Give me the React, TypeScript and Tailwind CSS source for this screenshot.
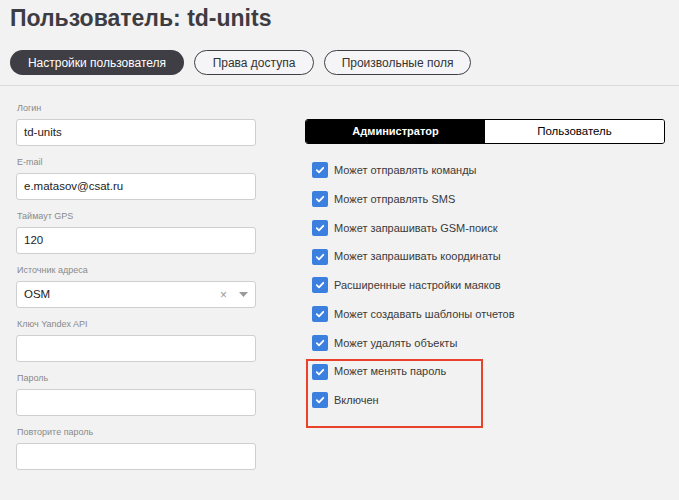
import React from 'react';

const fields = [
  { label: 'Логин', value: 'td-units' },
  { label: 'E-mail', value: 'e.matasov@csat.ru' },
  { label: 'Таймаут GPS', value: '120' },
  { label: 'Источник адреса', value: 'OSM', select: true },
  { label: 'Ключ Yandex API', value: '' },
  { label: 'Пароль', value: '' },
  { label: 'Повторите пароль', value: '' },
];

const perms = [
  'Может отправлять команды',
  'Может отправлять SMS',
  'Может запрашивать GSM-поиск',
  'Может запрашивать координаты',
  'Расширенные настройки маяков',
  'Может создавать шаблоны отчетов',
  'Может удалять объекты',
  'Может менять пароль',
  'Включен',
];

const Check = () => (
  <div className="w-4 h-4 rounded-[2px] bg-[#3b7fdf] flex items-center justify-center shrink-0">
    <svg width="10" height="10" viewBox="0 0 10 10" fill="none">
      <path d="M1.8 5.2 L4 7.3 L8.3 2.8" stroke="white" strokeWidth="1.8" strokeLinecap="round" strokeLinejoin="round" />
    </svg>
  </div>
);

export default function App() {
  return (
    <div className="w-[679px] h-[500px] bg-[#f2f2f2] overflow-hidden text-[#333] relative" style={{ fontFamily: '"Liberation Sans", Arial, sans-serif' }}>
      <div className="px-[10px] pt-[3px]">
        <h1 className="text-[23px] font-bold text-[#3d3c42] leading-[30px]">Пользователь: td-units</h1>
        <div className="flex gap-[10px] mt-[17px]">
          <button className="h-[25px] w-[174px] rounded-full bg-[#3f3e44] text-white text-[12px]">Настройки пользователя</button>
          <button className="h-[25px] w-[120px] rounded-full border border-[#3f3e44] bg-[#f5f5f7] text-[#333] text-[12px]">Права доступа</button>
          <button className="h-[25px] w-[147px] rounded-full border border-[#3f3e44] bg-[#f5f5f7] text-[#333] text-[12px]">Произвольные поля</button>
        </div>
      </div>
      <div className="h-px bg-[#dadada] mt-[10px]" />

      <div className="flex pt-[16px]">
        <div className="w-[240px] ml-[16px] flex flex-col gap-[10px]">
          {fields.map((f) => (
            <div key={f.label}>
              <div className="text-[9px] text-[#8a8a8a] pl-px leading-[12px] mb-[5px]">{f.label}</div>
              <div className="h-[27px] bg-white border border-[#cfcfcf] rounded-[3px] flex items-center px-[7px] text-[11.5px] text-[#222]">
                <span className="flex-1">{f.value}</span>
                {f.select && (
                  <div className="flex items-center gap-[12px] text-[#999]">
                    <span className="text-[12px] leading-none">×</span>
                    <svg width="9" height="5" viewBox="0 0 9 5"><path d="M0 0 L9 0 L4.5 5 Z" fill="#9a9a9a" /></svg>
                  </div>
                )}
              </div>
            </div>
          ))}
        </div>

        <div className="ml-[49px] w-[360px] pt-[17px]">
          <div className="flex h-[25px] border border-black rounded-[3px] overflow-hidden">
            <div className="w-1/2 bg-black text-white font-bold text-[11px] flex items-center justify-center">Администратор</div>
            <div className="w-1/2 bg-white text-black text-[11.5px] flex items-center justify-center">Пользователь</div>
          </div>
          <div className="mt-[12px] pl-[7px] flex flex-col">
            {perms.map((p) => (
              <div key={p} className="flex items-center gap-[6px] h-[28.75px]">
                <Check />
                <span className="text-[11px] text-[#3a3a3a]">{p}</span>
              </div>
            ))}
          </div>
        </div>
      </div>

      <div className="absolute left-[306px] top-[359px] w-[177px] h-[69px] border-2 border-[#e8412c]" />
    </div>
  );
}
